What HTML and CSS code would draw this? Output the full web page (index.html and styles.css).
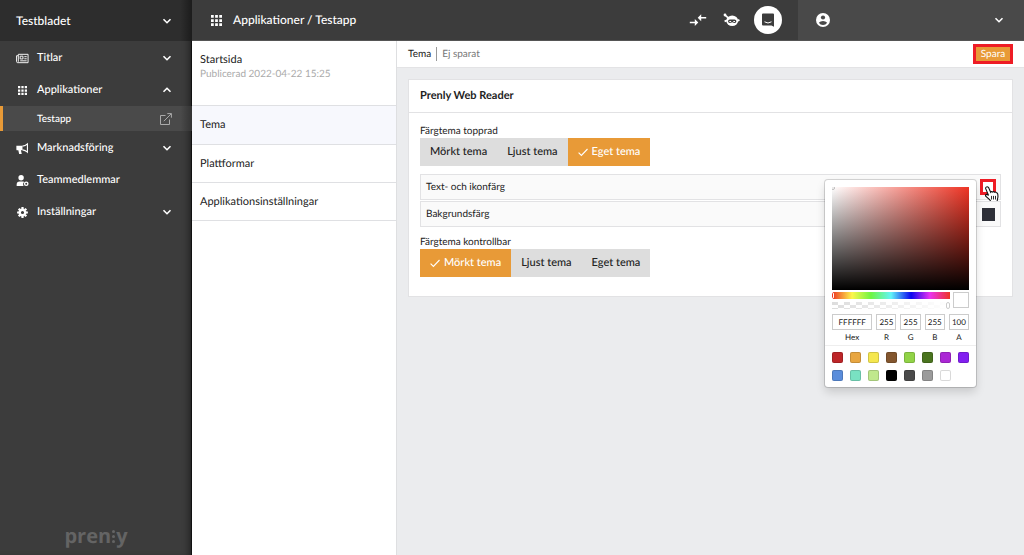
FILE: index.html
```html
<!DOCTYPE html>
<html lang="sv">
<head>
    <meta charset="UTF-8">
    <meta name="viewport" content="width=device-width, initial-scale=1.0">
    <title>Applikationer / Testapp</title>
    <link rel="stylesheet" href="styles.css">
</head>
<body>
    <svg class="sprite" aria-hidden="true">
        <symbol id="chevron" viewBox="0 0 10 10">
            <path d="M1.5 3.2 5 6.7 8.5 3.2" fill="none" stroke="currentColor" stroke-width="1.6"/>
        </symbol>
        <symbol id="grid" viewBox="0 0 12 12">
            <path d="M0 0h3v3H0zM4.500 0h3v3h-3zM9 0h3v3H9zM0 4.500h3v3H0zM4.500 4.500h3v3h-3zM9 4.500h3v3H9zM0 9h3v3H0zM4.500 9h3v3h-3zM9 9h3v3H9z" fill="currentColor"/>
        </symbol>
        <symbol id="check" viewBox="0 0 10 10">
            <path d="M.6 5.600 3.400 8.400 9.500 2" fill="none" stroke="currentColor" stroke-width="1.1"/>
        </symbol>
    </svg>

    <aside class="sidebar">
        <button type="button" class="title-switch">
            <span>Testbladet</span>
            <svg class="chevron"><use href="#chevron"/></svg>
        </button>
        <nav class="menu">
            <a href="#" class="menu-item">
                <svg class="menu-icon" viewBox="0 0 14 14">
                    <path d="M2.500 2.500h10.500v9H1.800Q.6 11.500.6 10V4h1.900zM2.500 4v6.500" fill="none" stroke="currentColor"/>
                    <path d="M4.500 4.500h3v3h-3zM4.500 9.500h7M9 5h2.500M9 7.300h2.500" fill="none" stroke="currentColor"/>
                </svg>
                <span>Titlar</span>
                <svg class="chevron"><use href="#chevron"/></svg>
            </a>
            <a href="#" class="menu-item">
                <svg class="menu-icon grid-small"><use href="#grid"/></svg>
                <span>Applikationer</span>
                <svg class="chevron up"><use href="#chevron"/></svg>
            </a>
            <a href="#" class="menu-item sub">
                <span>Testapp</span>
                <svg class="external" viewBox="0 0 12 12">
                    <path d="M5.500 2.500h-5v9h9v-5M3.800 8.200 11.300.7M7.300.6h4.100v4.100" fill="none" stroke="currentColor"/>
                </svg>
            </a>
            <a href="#" class="menu-item">
                <svg class="menu-icon" viewBox="0 0 14 14">
                    <path d="M.4 4H7v5H5.300l.9 3.800H3.400L2.500 9H1.400Q.4 9 .4 8z" fill="currentColor"/>
                    <path d="M7 4.500q3-.3 5.300-2.400v8.800Q10 8.800 7 8.500" fill="none" stroke="currentColor" stroke-width="1.200"/>
                    <path d="M12.300 5.200q1.600 1.200 0 2.600z" fill="currentColor"/>
                </svg>
                <span>Marknadsföring</span>
                <svg class="chevron"><use href="#chevron"/></svg>
            </a>
            <a href="#" class="menu-item">
                <svg class="menu-icon" viewBox="0 0 14 14">
                    <circle cx="5.500" cy="4" r="2.900" fill="currentColor"/>
                    <path d="M.7 12.800v-1.500Q.7 8 4 8h3.200q1 0 1.600.3a3.600 3.600 0 0 0-.7 4.500z" fill="currentColor"/>
                    <circle cx="11" cy="10.500" r="1.800" fill="none" stroke="currentColor" stroke-width="1.500"/>
                </svg>
                <span>Teammedlemmar</span>
            </a>
            <a href="#" class="menu-item">
                <svg class="menu-icon" viewBox="0 0 14 14">
                    <circle cx="7" cy="7" r="3" fill="none" stroke="currentColor" stroke-width="2.600"/>
                    <path d="M7 1.200v2M7 10.800v2M1.200 7h2M10.800 7h2M2.900 2.900l1.500 1.500M9.600 9.600l1.500 1.500M2.900 11.100l1.500-1.500M9.600 4.400l1.500-1.500" stroke="currentColor" stroke-width="2.400"/>
                </svg>
                <span>Inställningar</span>
                <svg class="chevron"><use href="#chevron"/></svg>
            </a>
        </nav>
        <div class="logo">pren<span class="logo-dots"><i></i><i></i><i></i></span>y</div>
    </aside>

    <div class="page">
        <header class="topbar">
            <svg class="topbar-grid"><use href="#grid"/></svg>
            <h1>Applikationer / Testapp</h1>
            <div class="tools">
                <button type="button" class="tool" aria-label="Växla">
                    <svg viewBox="0 0 18 18">
                        <path d="M.8 11.500h6M17.200 6.800h-6" stroke="currentColor" stroke-width="1.500"/>
                        <path d="M5.800 8 9.300 11.500l-3.500 3.500zM12.200 3.300 8.700 6.800l3.500 3.500z" fill="currentColor"/>
                    </svg>
                </button>
                <button type="button" class="tool" aria-label="Support">
                    <svg viewBox="0 0 18 18">
                        <path d="M1.800 3.900 5.500 7.200" stroke="currentColor" stroke-width="1.700"/>
                        <circle cx="2" cy="4" r="1.400" fill="currentColor"/>
                        <ellipse cx="9.200" cy="9.800" rx="5.900" ry="5.200" fill="currentColor"/>
                        <path d="M1.600 10.300 4 9.300M14 10.300l2.400-1.600" stroke="currentColor" stroke-width="1.800"/>
                        <path d="M5 10q.3-1.700 2.200-1.500h4q1.900-.2 2.200 1.500 0 2-1.700 2.100-1.100 0-2.500-.8-1.400.8-2.500.8Q5 12 5 10z" fill="#3c3c3c"/>
                        <path d="M6.400 10.500h1.700M10.300 10.500H12" stroke="currentColor" stroke-width="1.100"/>
                    </svg>
                </button>
                <button type="button" class="tool chat" aria-label="Chatt">
                    <svg viewBox="0 0 14 14">
                        <path d="M2 .5h10q1 0 1 1v12.200L10.500 12.500H2q-1 0-1-1v-10q0-1 1-1z" fill="#3c3c3c"/>
                        <path d="M3.500 8.800Q7 11.200 10.500 8.800" fill="none" stroke="#fff"/>
                    </svg>
                </button>
            </div>
            <button type="button" class="account" aria-label="Konto">
                <svg class="account-icon" viewBox="0 0 14 14">
                    <circle cx="7" cy="7" r="7" fill="#fff"/>
                    <circle cx="7" cy="4.500" r="2.100" fill="#494949"/>
                    <path d="M2.800 9.800Q4.500 8 7 8t4.200 1.800Q9.700 12 7 12T2.800 9.800z" fill="#494949"/>
                </svg>
                <svg class="chevron"><use href="#chevron"/></svg>
            </button>
        </header>

        <div class="columns">
            <nav class="sections">
                <a href="#" class="section start">Startsida
                    <small>Publicerad 2022-04-22 15:25</small>
                </a>
                <a href="#" class="section active">Tema</a>
                <a href="#" class="section">Plattformar</a>
                <a href="#" class="section">Applikationsinställningar</a>
            </nav>

            <main class="content">
                <div class="savebar">
                    <span class="savebar-title">Tema</span>
                    <span class="savebar-status">Ej sparat</span>
                    <button type="button" class="save">Spara</button>
                </div>

                <section class="card">
                    <h2>Prenly Web Reader</h2>
                    <div class="card-body">
                        <div class="group">
                            <div class="group-label">Färgtema topprad</div>
                            <div class="choices">
                                <button type="button">Mörkt tema</button>
                                <button type="button">Ljust tema</button>
                                <button type="button" class="selected"><svg><use href="#check"/></svg>Eget tema</button>
                            </div>
                        </div>

                        <div class="colors">
                            <div class="color-row">
                                <span>Text- och ikonfärg</span>
                                <button type="button" class="color-button marked" aria-label="Text- och ikonfärg"></button>
                                <svg class="pointer" viewBox="0 0 16 20">
                                    <path d="M1.500 1.200Q3 .2 4.200 1.800L6.500 7q.8-1.300 2.200-.3 1-1 2.200.2 1.200-.7 2 .6 1.200-.2 1.500 1.500.5 3-.2 5L13.500 18H7.200L5.600 15.500 1 11.300q-.7-1.500.8-2 1.200 0 2.400 1.200L1 3Q.7 1.800 1.500 1.200z" fill="#fff" stroke="#111" stroke-width="1.200"/>
                                    <path d="M7.500 11v4M9.700 11v4M11.900 11v4" stroke="#111"/>
                                </svg>

                                <div class="picker">
                                    <div class="picker-top">
                                        <div class="shade"><i class="shade-dot"></i></div>
                                        <div class="bars">
                                            <div class="sliders">
                                                <div class="hue"><i></i></div>
                                                <div class="alpha"><i></i></div>
                                            </div>
                                            <div class="current"></div>
                                        </div>
                                        <div class="fields">
                                            <label><input type="text" value="FFFFFF">Hex</label>
                                            <label><input type="text" value="255">R</label>
                                            <label><input type="text" value="255">G</label>
                                            <label><input type="text" value="255">B</label>
                                            <label><input type="text" value="100">A</label>
                                        </div>
                                    </div>
                                    <div class="presets">
                                        <button type="button" style="background: #bd2528" aria-label="Röd"></button>
                                        <button type="button" style="background: #e8a641" aria-label="Orange"></button>
                                        <button type="button" style="background: #f5e74f" aria-label="Gul"></button>
                                        <button type="button" style="background: #83562e" aria-label="Brun"></button>
                                        <button type="button" style="background: #91d347" aria-label="Ljusgrön"></button>
                                        <button type="button" style="background: #4a741f" aria-label="Grön"></button>
                                        <button type="button" style="background: #ab27d5" aria-label="Lila"></button>
                                        <button type="button" style="background: #821ff0" aria-label="Violett"></button>
                                        <button type="button" style="background: #5a8ddb" aria-label="Blå"></button>
                                        <button type="button" style="background: #79e1c2" aria-label="Turkos"></button>
                                        <button type="button" style="background: #c0e88d" aria-label="Lime"></button>
                                        <button type="button" style="background: #000000" aria-label="Svart"></button>
                                        <button type="button" style="background: #4a4a4a" aria-label="Mörkgrå"></button>
                                        <button type="button" style="background: #9b9b9b" aria-label="Grå"></button>
                                        <button type="button" style="background: #ffffff" aria-label="Vit"></button>
                                    </div>
                                </div>
                            </div>
                            <div class="color-row">
                                <span>Bakgrundsfärg</span>
                                <button type="button" class="color-button" aria-label="Bakgrundsfärg"></button>
                            </div>
                        </div>

                        <div class="group">
                            <div class="group-label">Färgtema kontrollbar</div>
                            <div class="choices">
                                <button type="button" class="selected"><svg><use href="#check"/></svg>Mörkt tema</button>
                                <button type="button">Ljust tema</button>
                                <button type="button">Eget tema</button>
                            </div>
                        </div>
                    </div>
                </section>
            </main>
        </div>
    </div>
</body>
</html>
```
FILE: styles.css
```css
* {
    box-sizing: border-box;
}
body {
    margin: 0;
    min-height: 100vh;
    display: flex;
    font-family: Lato, sans-serif;
    font-size: 11px;
    line-height: 14px;
    text-rendering: geometricPrecision;
    color: #222;
    background: #ebecee;
}
button {
    font: inherit;
    color: inherit;
    text-rendering: inherit;
    border: none;
    padding: 0;
    background: none;
    cursor: pointer;
}
a {
    color: inherit;
    text-decoration: none;
}
.sprite {
    position: absolute;
    width: 0;
    height: 0;
}
.chevron {
    width: 10px;
    height: 10px;
    margin-left: auto;
}
.up {
    transform: rotate(180deg);
}

/* sidebar */
.sidebar {
    width: 192px;
    flex-shrink: 0;
    display: flex;
    flex-direction: column;
    color: #fff;
    background: #3c3c3c;
    box-shadow: inset -1px 0 #111, inset -7px 0 6px -4px #222;
}
.title-switch {
    display: flex;
    align-items: center;
    height: 41px;
    padding: 0 20px 0 16px;
    font-size: 12px;
    font-weight: 500;
    background: linear-gradient(to right, #2d2d2d 94%, #1c1c1c);
}
.menu {
    padding-top: 1px;
}
.menu-item {
    display: flex;
    align-items: center;
    height: 32px;
    padding: 0 20px 0 16px;
    font-size: 11px;
    font-weight: 500;
}
.menu-icon {
    width: 13px;
    height: 13px;
    margin-right: 8px;
}
.grid-small {
    padding: 2px;
}
.sub {
    height: 25px;
    margin-bottom: 1px;
    padding-left: 34px;
    font-size: 10px;
    border-left: 3px solid #e89a37;
    background: linear-gradient(to right, #4a4a4a 94%, #333);
}
.external {
    width: 12px;
    height: 12px;
    margin-left: auto;
    color: #aaa;
}
.logo {
    display: flex;
    justify-content: center;
    margin-top: auto;
    padding-bottom: 8px;
    font-family: "Open Sans", sans-serif;
    font-size: 20px;
    line-height: 22px;
    font-weight: bold;
    color: #646464;
}
.logo-dots {
    display: flex;
    flex-direction: column;
    justify-content: center;
    gap: 2px;
    padding: 0 1px;
}
.logo-dots i {
    width: 3px;
    height: 3px;
    border-radius: 50%;
    background: #646464;
}

/* top bar */
.page {
    flex: 1;
    min-width: 0;
    display: flex;
    flex-direction: column;
}
.topbar {
    display: flex;
    align-items: center;
    height: 41px;
    padding-left: 19px;
    color: #fff;
    background: #3c3c3c;
    border-bottom: 1px solid #555;
}
.topbar-grid {
    width: 11px;
    height: 11px;
}
h1 {
    margin: 0 0 0 11px;
    font-size: 12px;
    font-weight: 500;
}
.tools {
    display: flex;
    align-items: center;
    gap: 10px;
    margin-left: auto;
    padding-right: 16px;
}
.tool {
    display: flex;
    align-items: center;
    justify-content: center;
    width: 24px;
}
.tool svg {
    width: 18px;
    height: 18px;
}
.tool.chat {
    width: 28px;
    height: 28px;
    border-radius: 50%;
    background: #fff;
}
.chat svg {
    width: 14px;
    height: 14px;
}
.account {
    display: flex;
    align-items: center;
    width: 226px;
    height: 40px;
    padding: 0 20px 0 18px;
    background: #494949;
}
.account-icon {
    width: 14px;
    height: 14px;
}

/* section list */
.columns {
    flex: 1;
    display: flex;
}
.sections {
    width: 205px;
    flex-shrink: 0;
    background: #fff;
    border-right: 1px solid #dedfe1;
}
.section {
    display: flex;
    align-items: center;
    height: 38px;
    padding: 0 8px;
    font-size: 11px;
    border-bottom: 1px solid #dfe0e3;
}
.start {
    flex-direction: column;
    align-items: flex-start;
    height: 65px;
    padding-top: 12px;
}
.section small {
    font-size: 10px;
    color: #aaa;
}
.section.active {
    height: 39px;
    background: #f7f8fd;
}

/* content */
.content {
    flex: 1;
    min-width: 0;
}
.savebar {
    display: flex;
    align-items: center;
    height: 27px;
    padding: 0 11px;
    font-size: 10px;
    background: #fff;
    border-bottom: 1px solid #e3e3e5;
}
.savebar-status {
    margin-left: 5px;
    padding-left: 5px;
    color: #777;
    border-left: 1px solid #999;
}
.save {
    width: 40px;
    height: 20px;
    margin-left: auto;
    color: #fff;
    background: #e89a37;
    border: 3px solid #ee1c25;
}
.card {
    margin: 11px;
    background: #fff;
    border: 1px solid #e2e2e4;
}
h2 {
    margin: 0;
    padding: 9px 11px;
    font-size: 11px;
    font-weight: bold;
    border-bottom: 1px solid #e2e2e4;
}
.card-body {
    padding: 11px 11px 19px;
}
.group-label {
    font-size: 10px;
}
.choices {
    display: inline-flex;
    vertical-align: top;
    height: 28px;
    background: #ddd;
}
.choices button {
    display: flex;
    align-items: center;
    padding: 0 10px;
    font-size: 11px;
    font-weight: 500;
}
.choices svg {
    width: 10px;
    height: 10px;
    margin-right: 4px;
}
.choices .selected {
    color: #fff;
    background: #e89a37;
}
.colors {
    display: flex;
    flex-direction: column;
    gap: 1px;
    margin: 8px 0;
}
.color-row {
    position: relative;
    display: flex;
    align-items: center;
    justify-content: space-between;
    height: 26px;
    padding: 0 5px;
    font-size: 10px;
    background: #fafafa;
    border: 1px solid #e2e2e4;
}
.color-button {
    width: 13px;
    height: 13px;
    background: #2e3038;
}
.marked {
    width: 16px;
    height: 16px;
    margin-right: -1px;
    background: #fff;
    border: 3px solid #ee1c25;
}
.pointer {
    position: absolute;
    top: 11px;
    right: 0;
    width: 16px;
    height: 18px;
}

/* color picker */
.picker {
    position: absolute;
    z-index: 1;
    top: 5px;
    right: 24px;
    width: 151px;
    background: #fff;
    border-radius: 3px;
    box-shadow: 0 0 0 1px rgba(0, 0, 0, 0.15), 0 5px 10px rgba(0, 0, 0, 0.15);
}
.picker-top {
    padding: 7px 7px 1px;
}
.shade {
    position: relative;
    height: 103px;
    overflow: hidden;
    background: linear-gradient(to top, #000, transparent), linear-gradient(to right, #fff, #ee3424);
}
.shade-dot {
    position: absolute;
    top: -1px;
    left: -1px;
    width: 4px;
    height: 4px;
    border: 1px solid #bbb;
    border-radius: 50%;
}
.bars {
    display: flex;
    gap: 3px;
    margin-top: 2px;
}
.sliders {
    flex: 1;
    display: flex;
    flex-direction: column;
    gap: 3px;
}
.hue,
.alpha {
    position: relative;
    height: 7px;
}
.hue {
    background: linear-gradient(to right, #ee3424, #fdf64b 17%, #6ef542 33%, #62f4f8 50%, #0a05ef 67%, #ea33f0 83%, #ee3424);
}
.alpha {
    background: linear-gradient(to right, transparent, #fff), repeating-conic-gradient(#fff 0 25%, #ddd 0 50%) 0 0 / 12px 6px;
}
.hue i,
.alpha i {
    position: absolute;
    width: 4px;
    height: 7px;
    background: #fff;
    border: 1px solid #ccc;
    border-radius: 2px;
}
.hue i {
    left: -2px;
    background: none;
    border-color: #fff;
}
.alpha i {
    right: 0;
}
.current {
    width: 16px;
    height: 16px;
    border: 1px solid #ccc;
}
.fields {
    display: grid;
    grid-template-columns: 2fr 1fr 1fr 1fr 1fr;
    gap: 4px;
    margin-top: 5px;
    font-size: 8px;
    text-align: center;
}
.fields input {
    display: block;
    width: 100%;
    height: 16px;
    padding: 0;
    font: inherit;
    text-align: center;
    text-rendering: inherit;
    color: #222;
    border: 1px solid #ccc;
}
.presets {
    display: grid;
    grid-template-columns: repeat(8, 11px);
    justify-content: space-between;
    gap: 7px 0;
    padding: 6px 7px;
    border-top: 1px solid #eee;
}
.presets button {
    width: 11px;
    height: 11px;
    border-radius: 2px;
    box-shadow: inset 0 0 0 1px rgba(0, 0, 0, 0.15);
}
```
